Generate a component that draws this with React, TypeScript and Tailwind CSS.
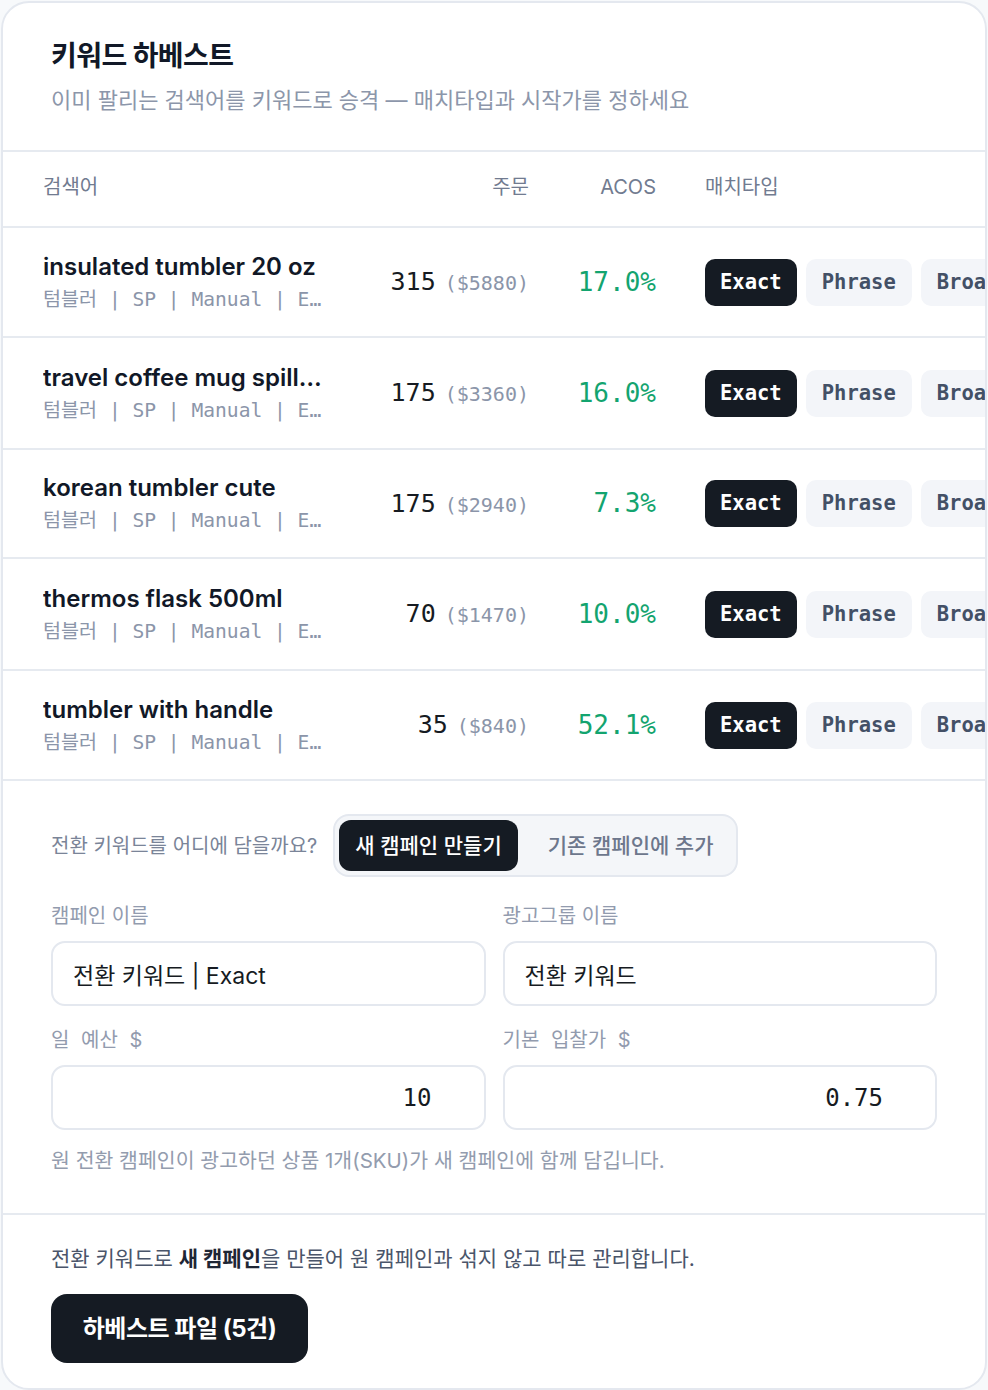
import React from "react";

const SANS = "font-['Inter','Noto_Sans_CJK_KR',sans-serif]";
const MONO = "font-['DejaVu_Sans_Mono','Noto_Sans_CJK_KR',monospace]";

type Row = {
  keyword: string;
  meta: string;
  orders: number;
  sales: number;
  acos: string;
  height: string;
};

const rows: Row[] = [
  { keyword: "insulated tumbler 20 oz", meta: "텀블러 | SP | Manual | Exact", orders: 315, sales: 5880, acos: "17.0%", height: "h-[110px]" },
  { keyword: "travel coffee mug spill proof", meta: "텀블러 | SP | Manual | Exact", orders: 175, sales: 3360, acos: "16.0%", height: "h-[112px]" },
  { keyword: "korean tumbler cute", meta: "텀블러 | SP | Manual | Exact", orders: 175, sales: 2940, acos: "7.3%", height: "h-[109px]" },
  { keyword: "thermos flask 500ml", meta: "텀블러 | SP | Manual | Exact", orders: 70, sales: 1470, acos: "10.0%", height: "h-[112px]" },
  { keyword: "tumbler with handle", meta: "텀블러 | SP | Manual | Exact", orders: 35, sales: 840, acos: "52.1%", height: "h-[110px]" },
];

function MatchButtons() {
  return (
    <div className="flex shrink-0 items-center gap-[9px] pl-[49px]">
      <span className={`${MONO} flex h-[47px] shrink-0 items-center rounded-[10px] bg-[#151b23] px-[15px] text-[20.5px] font-bold text-white`}>
        Exact
      </span>
      <span className={`${MONO} flex h-[47px] shrink-0 items-center rounded-[10px] bg-[#f3f5f9] px-4 text-[20.5px] font-bold text-[#435066]`}>
        Phrase
      </span>
      <span className={`${MONO} flex h-[47px] shrink-0 items-center rounded-[10px] bg-[#f3f5f9] px-4 text-[20.5px] font-bold text-[#435066]`}>
        Broad
      </span>
    </div>
  );
}

function KeywordRow({ row }: { row: Row }) {
  return (
    <div className={`${row.height} flex w-max min-w-full items-center border-b-2 border-[#e6eaf0] pl-10`}>
      <div className="w-[286px] shrink-0">
        <div className={`${SANS} w-[283px] truncate text-[24px] font-semibold leading-[30px] text-[#111827]`}>
          {row.keyword}
        </div>
        <div className={`${MONO} mt-[5px] w-[284px] truncate text-[19.6px] leading-[26px] text-[#8b95a9]`}>{row.meta}</div>
      </div>
      <div className="flex w-[200px] shrink-0 items-baseline justify-end gap-[9px]">
        <span className={`${MONO} text-[25px] text-[#161b22]`}>{row.orders}</span>
        <span className={`${MONO} text-[20px] text-[#8b95a9]`}>(${row.sales})</span>
      </div>
      <div className={`${MONO} w-[127px] shrink-0 text-right text-[26px] text-[#13a46f]`}>{row.acos}</div>
      <MatchButtons />
    </div>
  );
}

function Field({ label, value, mono }: { label: React.ReactNode; value: string; mono?: boolean }) {
  return (
    <div className="flex flex-col">
      <div className={`${SANS} text-[20px] leading-[26px] text-[#929bae]`}>{label}</div>
      <input
        readOnly
        value={value}
        className={
          mono
            ? `${MONO} mt-[12px] h-[65px] w-full rounded-[14px] border-2 border-[#e4e8ef] bg-white pr-[52px] text-right text-[24px] text-[#161b22] outline-none`
            : `${SANS} mt-[12px] h-[65px] w-full rounded-[14px] border-2 border-[#e4e8ef] bg-white px-5 text-[23px] text-[#161b22] outline-none`
        }
      />
    </div>
  );
}

export default function App() {
  return (
    <div className="min-h-screen bg-[#f7f9fb] p-px">
      <div className={`${SANS} w-[986px] overflow-hidden rounded-[28px] border-2 border-[#e4e8ef] bg-white`}>
        {/* heading */}
        <div className="border-b-2 border-[#e6eaf0] px-12 pb-[36px] pt-[36px]">
          <h1 className="text-[28px] font-bold leading-[35px] tracking-[-0.02em] text-[#111827]">키워드 하베스트</h1>
          <p className="mt-[12px] text-[22px] leading-[28px] text-[#8c96aa]">
            이미 팔리는 검색어를 키워드로 승격 — 매치타입과 시작가를 정하세요
          </p>
        </div>

        {/* keyword table */}
        <div className="overflow-hidden">
          <div className="flex h-[76px] w-max min-w-full items-center border-b-2 border-[#e6eaf0] pb-[5px] pl-10 text-[20px] text-[#717b90]">
            <div className="w-[286px] shrink-0">검색어</div>
            <div className="w-[200px] shrink-0 text-right">주문</div>
            <div className="w-[127px] shrink-0 text-right">ACOS</div>
            <div className="shrink-0 pl-[49px]">매치타입</div>
          </div>
          {rows.map((r) => (
            <KeywordRow key={r.keyword} row={r} />
          ))}
        </div>

        {/* campaign settings */}
        <div className="border-b-2 border-[#e6eaf0] px-12 pb-[38px] pt-[33px]">
          <div className="flex items-center gap-4">
            <span className="text-[20px] text-[#7a8498]">전환 키워드를 어디에 담을까요?</span>
            <div className="flex items-center rounded-[16px] border-2 border-[#e4e8ef] bg-[#f4f6f9] p-[4px]">
              <span className="flex h-[51px] items-center rounded-[12px] bg-[#151b23] px-4 text-[21px] font-medium text-white">
                새 캠페인 만들기
              </span>
              <span className="flex h-[51px] items-center pl-[30px] pr-[18px] text-[21px] font-medium text-[#6d778c]">
                기존 캠페인에 추가
              </span>
            </div>
          </div>

          <div className="mt-[26px] grid grid-cols-2 gap-x-[17px] gap-y-[21px]">
            <Field label="캠페인 이름" value="전환 키워드 | Exact" />
            <Field label="광고그룹 이름" value="전환 키워드" />
            <Field label={<span className="[word-spacing:0.3em]">일 예산 $</span>} value="10" mono />
            <Field label={<span className="[word-spacing:0.3em]">기본 입찰가 $</span>} value="0.75" mono />
          </div>

          <p className="mt-[17px] text-[20.5px] leading-[28px] text-[#939cae]">
            원 전환 캠페인이 광고하던 상품 1개(SKU)가 새 캠페인에 함께 담깁니다.
          </p>
        </div>

        {/* footer */}
        <div className="px-12 pb-[25px] pt-[30px]">
          <p className="text-[21px] leading-[28px] text-[#4a556a]">
            전환 키워드로 <b className="font-bold text-[#1e2635]">새 캠페인</b>을 만들어 원 캠페인과 섞지 않고 따로 관리합니다.
          </p>
          <button className="mt-[21px] flex h-[69px] w-[257px] items-center justify-center rounded-[16px] bg-[#151b23] text-[24px] font-bold tracking-[-0.02em] text-white">
            하베스트 파일 (5건)
          </button>
        </div>
      </div>
    </div>
  );
}
